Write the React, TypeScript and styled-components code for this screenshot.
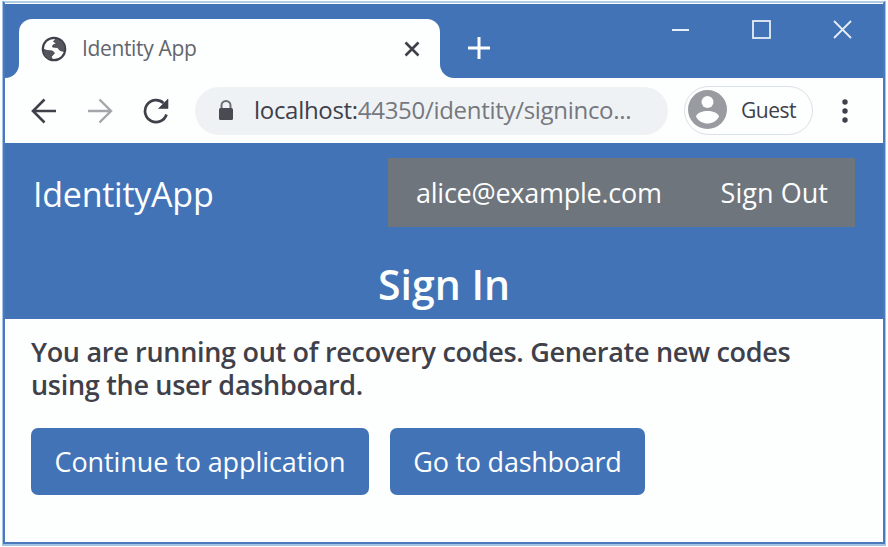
import React from 'react';
import styled, { createGlobalStyle } from 'styled-components';

const BLUE = '#4273b6';
const INK = '#3f4049';

const GlobalStyle = createGlobalStyle`
  * { box-sizing: border-box; }
  html, body { margin: 0; background: #fdfefe; }
  body { font-family: 'Open Sans', 'Noto Sans', sans-serif; overflow: hidden; }
  h1, p { margin: 0; }
  button { font-family: inherit; border: 0; padding: 0; background: none; color: inherit; }
  svg { display: block; flex: none; }
`;

const Frame = styled.div`
  height: 547px;
  padding: 1px 3px 3px;
  overflow: hidden;
`;

const Window = styled.div`
  height: 543px;
  display: flex;
  flex-direction: column;
  padding-top: 1px;
  border: 2px solid #4a7abb;
  border-top-color: #b0cde5;
  box-shadow: 0 1px 0 1px #a3c4e4;
  background: #fdfefe;
`;

const TitleBar = styled.div`
  height: 74px;
  flex: none;
  display: flex;
  background: ${BLUE};
`;

const TabCurve = styled.svg`
  align-self: flex-end;
`;

const Tab = styled.div`
  width: 421px;
  height: 59px;
  margin-top: 15px;
  padding: 0 20px 0 22px;
  display: flex;
  align-items: center;
  border-radius: 13px 13px 0 0;
  background: #fdfefe;
`;

const TabTitle = styled.span`
  flex: 1;
  margin: -2px 0 0 15px;
  font-size: 21px;
  line-height: 30px;
  letter-spacing: -0.35px;
  color: #63656c;
`;

const NewTab = styled.button`
  width: 22px;
  margin: 13px 0 0 14px;
`;

const WindowControls = styled.div`
  display: flex;
  gap: 62px;
  margin: 16px 31px 0 auto;
`;

const Toolbar = styled.div`
  height: 65px;
  flex: none;
  display: flex;
  align-items: center;
  padding-left: 26px;
`;

const NavIcons = styled.div`
  display: flex;
  gap: 30px;
`;

const AddressBar = styled.div`
  width: 473px;
  height: 48px;
  margin-left: 26px;
  padding-left: 23px;
  display: flex;
  align-items: center;
  gap: 20px;
  border-radius: 24px;
  background: #eff2f5;
`;

const Url = styled.span`
  margin-top: -2px;
  font-size: 24px;
  line-height: 34px;
  letter-spacing: -0.3px;
  white-space: nowrap;
  color: #75787d;
`;

const Host = styled.span`
  color: ${INK};
`;

const Profile = styled.div`
  width: 129px;
  height: 49px;
  margin-left: 16px;
  padding: 0 0 2px 3px;
  display: flex;
  align-items: center;
  gap: 14px;
  border: 1px solid #d9e0e7;
  border-radius: 25px;
  font-size: 21px;
  letter-spacing: -0.5px;
  color: ${INK};
`;

const MenuDots = styled.svg`
  margin-left: 29px;
`;

const SiteHeader = styled.header`
  height: 176px;
  flex: none;
  display: flex;
  flex-direction: column;
  background: ${BLUE};
  color: #fdfefe;
`;

const NavRow = styled.div`
  display: flex;
  justify-content: space-between;
  padding: 15px 28px 0 28px;
`;

const Brand = styled.span`
  font-size: 34px;
  line-height: 72px;
  height: 73px;
  letter-spacing: -0.25px;
`;

const AccountNav = styled.nav`
  width: 467px;
  height: 69px;
  padding: 0 27px 0 28px;
  display: flex;
  align-items: center;
  justify-content: space-between;
  background: #6e757c;
`;

const AccountLink = styled.a<{ $tracking: number }>`
  font-size: 27px;
  line-height: 36px;
  letter-spacing: ${(p) => p.$tracking}px;
  white-space: nowrap;
`;

const PageTitle = styled.h1`
  margin-top: 25px;
  text-align: center;
  font-size: 41px;
  line-height: 56px;
  font-weight: 600;
`;

const Content = styled.main`
  padding: 16px 26px;
`;

const Message = styled.p`
  font-size: 27px;
  line-height: 33px;
  font-weight: 600;
  letter-spacing: -0.3px;
  white-space: nowrap;
  color: ${INK};
`;

const Actions = styled.div`
  display: flex;
  gap: 21px;
  margin-top: 27px;
`;

const ActionButton = styled.button<{ $width: number; $tracking: number }>`
  && {
    width: ${(p) => p.$width}px;
    height: 67px;
    border-radius: 7px;
    background: ${BLUE};
    color: #fdfefe;
    font-size: 27px;
    letter-spacing: ${(p) => p.$tracking}px;
    white-space: nowrap;
  }
`;

const GlobeIcon = () => (
  <svg width="26" height="26" viewBox="0 0 26 26">
    <circle cx="13" cy="13" r="11.2" fill="none" stroke={INK} strokeWidth="2.2" />
    <path
      d="M15 2.500l-2.500 3 3 2-3.500 1.500-.5 2 5 .500 2.500 3 4.500 1 .500-5-3-5.500zM2 13l4 1.500 5.500.500 2 2-3 3.500.500 3.500-4-1-4-4z"
      fill="#55575e"
      stroke={INK}
      strokeWidth="0.8"
    />
  </svg>
);

const BackIcon = () => (
  <svg width="26" height="26" viewBox="0 0 26 26" fill="none" stroke={INK} strokeWidth="2.6">
    <path d="M25 13H3M13.5 1.5L2 13l11.5 11.5" />
  </svg>
);

const ForwardIcon = () => (
  <svg width="26" height="26" viewBox="0 0 26 26" fill="none" stroke="#a3a5aa" strokeWidth="2.4">
    <path d="M1 13h22M12.5 1.5L24 13 12.5 24.5" />
  </svg>
);

const ReloadIcon = () => (
  <svg width="26" height="26" viewBox="0 0 26 26">
    <path d="M23.5 16.5A11 11 0 1 1 20.500 5" fill="none" stroke={INK} strokeWidth="2.7" />
    <path d="M25 1v9.500H15.500z" fill={INK} stroke={INK} strokeWidth="0.6" />
  </svg>
);

const LockIcon = () => (
  <svg width="16" height="21" viewBox="0 0 16 21">
    <path d="M3.5 9V5.5a4.500 4.500 0 0 1 9 0V9" fill="none" stroke="#6a6c72" strokeWidth="2" />
    <rect x="1" y="8" width="14" height="12" rx="1.500" fill="#4a4b52" />
  </svg>
);

const AvatarIcon = () => (
  <svg width="39" height="39" viewBox="0 0 39 39">
    <circle cx="19.5" cy="19.5" r="19.5" fill="#989ba0" />
    <circle cx="19.5" cy="12" r="6" fill="#fdfefe" />
    <path d="M8 26.500C9 22.500 15 21 19.500 21S30 22.500 31 26.500C29 31 24 33.500 19.500 33.500S10 31 8 26.500z" fill="#fdfefe" />
  </svg>
);

export default function App() {
  return (
    <>
      <GlobalStyle />
      <Frame>
        <Window>
          <TitleBar>
            <TabCurve width="14" height="14" viewBox="0 0 14 14">
              <path d="M14 0v14H0A14 14 0 0 0 14 0z" fill="#fdfefe" />
            </TabCurve>
            <Tab>
              <GlobeIcon />
              <TabTitle>Identity App</TabTitle>
              <svg width="16" height="16" viewBox="0 0 16 16" stroke={INK} strokeWidth="2.6">
                <path d="M1.500 1.500l13 13M14.500 1.500l-13 13" />
              </svg>
            </Tab>
            <TabCurve width="14" height="14" viewBox="0 0 14 14">
              <path d="M0 0v14h14A14 14 0 0 1 0 0z" fill="#fdfefe" />
            </TabCurve>
            <NewTab aria-label="New tab">
              <svg width="22" height="22" viewBox="0 0 22 22" stroke="#fdfefe" strokeWidth="3">
                <path d="M0 11h22M11 0v22" />
              </svg>
            </NewTab>
            <WindowControls>
              <svg width="19" height="19" viewBox="0 0 19 19" stroke="#e6eef6" strokeWidth="2">
                <path d="M1 10h17" />
              </svg>
              <svg width="19" height="19" viewBox="0 0 19 19" fill="none" stroke="#e6eef6" strokeWidth="1.8">
                <rect x="1" y="1" width="17" height="17" />
              </svg>
              <svg width="19" height="19" viewBox="0 0 19 19" stroke="#e6eef6" strokeWidth="1.8">
                <path d="M1 1l17 17M18 1L1 18" />
              </svg>
            </WindowControls>
          </TitleBar>
          <Toolbar>
            <NavIcons>
              <BackIcon />
              <ForwardIcon />
              <ReloadIcon />
            </NavIcons>
            <AddressBar>
              <LockIcon />
              <Url><Host>localhost:</Host>44350/identity/signinco...</Url>
            </AddressBar>
            <Profile>
              <AvatarIcon />
              Guest
            </Profile>
            <MenuDots width="6" height="24" viewBox="0 0 6 24" fill={INK}>
              <circle cx="3" cy="3" r="2.7" />
              <circle cx="3" cy="12" r="2.7" />
              <circle cx="3" cy="21" r="2.7" />
            </MenuDots>
          </Toolbar>
          <SiteHeader>
            <NavRow>
              <Brand>IdentityApp</Brand>
              <AccountNav>
                <AccountLink $tracking={-0.25}>alice@example.com</AccountLink>
                <AccountLink $tracking={0.05}>Sign Out</AccountLink>
              </AccountNav>
            </NavRow>
            <PageTitle>Sign In</PageTitle>
          </SiteHeader>
          <Content>
            <Message>
              You are running out of recovery codes. Generate new codes
              <br />
              using the user dashboard.
            </Message>
            <Actions>
              <ActionButton $width={338} $tracking={-0.1}>Continue to application</ActionButton>
              <ActionButton $width={255} $tracking={-0.25}>Go to dashboard</ActionButton>
            </Actions>
          </Content>
        </Window>
      </Frame>
    </>
  );
}
